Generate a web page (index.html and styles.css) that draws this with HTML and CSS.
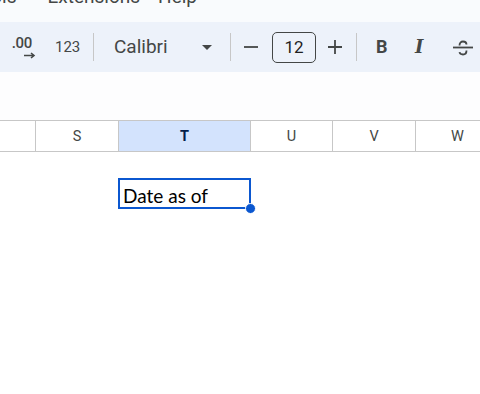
FILE: index.html
```html
<!DOCTYPE html>
<html>
<head>
<meta charset="utf-8">
<link rel="stylesheet" href="styles.css">
</head>
<body>
<div class="menubar">
  <div class="menu-items">
    <span class="menu-item tools">Tools</span>
    <span class="menu-item ext">Extensions</span>
    <span class="menu-item">Help</span>
  </div>
</div>
<div class="toolbar">
  <div class="dec">
    <span class="dec-text">.00</span>
    <svg class="dec-arrow" width="12" height="7" viewBox="0 0 12 7"><path d="M0 3.5h9.5M7 1l3 2.5L7 6" fill="none" stroke="#444746" stroke-width="1.6"/></svg>
  </div>
  <span class="num">123</span>
  <span class="sep sep1"></span>
  <div class="font">
    <span class="font-name">Calibri</span>
    <svg class="tri" width="10" height="5" viewBox="0 0 10 5"><path d="M0 0h10L5 5z" fill="#444746"/></svg>
  </div>
  <span class="sep sep2"></span>
  <svg class="minus" width="14" height="14" viewBox="0 0 14 14"><path d="M0 7h14" stroke="#444746" stroke-width="1.8"/></svg>
  <div class="size">12</div>
  <svg class="plus" width="14" height="14" viewBox="0 0 14 14"><path d="M0 7h14M7 0v14" stroke="#444746" stroke-width="1.8"/></svg>
  <span class="sep sep3"></span>
  <span class="bold">B</span>
  <span class="ital">I</span>
  <svg class="strike" width="20" height="16" viewBox="0 0 20 16"><path d="M0 7.5h20" stroke="#444746" stroke-width="1.8"/><path d="M6.5 5.5C6.5 3 8 1.5 10 1.5s3.5 1.2 3.5 3" fill="none" stroke="#444746" stroke-width="1.8"/><path d="M13.5 10.5c0 2.5-1.5 4-3.5 4s-3.3-1-3.5-2.3" fill="none" stroke="#444746" stroke-width="1.8"/></svg>
</div>
<div class="gap-area"></div>
<div class="sheet">
  <div class="header-row">
    <div class="col c0"></div>
    <div class="col cs">S</div>
    <div class="col ct">T</div>
    <div class="col cu">U</div>
    <div class="col cv">V</div>
    <div class="col cw">W</div>
  </div>
  <div class="row row1"></div>
  <div class="row row2">
    <div class="lead"></div>
    <div class="selected">
      <span class="cell-text">Date as of</span>
      <span class="handle"></span>
    </div>
  </div>
</div>
</body>
</html>
```
FILE: styles.css
```css
* { box-sizing: border-box; }
html, body { margin: 0; padding: 0; }
body {
  width: 480px;
  height: 394px;
  overflow: hidden;
  background: #ffffff;
  font-family: Roboto, "Liberation Sans", sans-serif;
  color: #444746;
}
.menubar {
  height: 22px;
  background: #f9fbfd;
  overflow: hidden;
}
.menu-items {
  display: flex;
  margin-top: -13px;
  font-size: 19px;
  line-height: 20px;
  color: #444746;
  white-space: nowrap;
}
.menu-item.tools { margin-left: -30px; margin-right: 31px; }
.menu-item.ext { margin-right: 18px; }

.toolbar {
  height: 50px;
  background: #edf2fa;
  display: flex;
  align-items: center;
  padding-left: 13px;
  white-space: nowrap;
}
.dec {
  width: 23px;
  margin-right: 19px;
  display: flex;
  flex-direction: column;
  align-items: flex-end;
  margin-top: 1px;
}
.dec-text {
  font-size: 15px;
  line-height: 14px;
  font-weight: 500;
  padding-right: 4px;
  letter-spacing: -0.3px;
}
.dec-arrow { margin-top: 2px; margin-right: 0; }
.num {
  width: 24px;
  margin-right: 14px;
  font-size: 15px;
  line-height: 20px;
}
.sep {
  width: 1px;
  height: 28px;
  background: #c7c7c7;
}
.sep1 { margin-right: 20px; }
.sep2 { margin-right: 13px; }
.sep3 { margin-right: 19px; }
.font {
  width: 116px;
  display: flex;
  align-items: center;
}
.font-name {
  width: 88px;
  font-size: 19px;
  line-height: 22px;
}
.tri { margin-top: 1px; }
.minus { margin-right: 14px; }
.size {
  width: 44px;
  height: 31px;
  border: 1px solid #444746;
  border-radius: 5px;
  margin-right: 12px;
  display: flex;
  align-items: center;
  justify-content: center;
  font-size: 17px;
  color: #1f1f1f;
}
.plus { margin-right: 14px; }
.bold {
  width: 12px;
  margin-right: 27px;
  font-weight: 700;
  font-size: 18px;
  line-height: 20px;
}
.ital {
  width: 14px;
  margin-right: 24px;
  font-family: "DejaVu Serif", serif;
  font-style: italic;
  font-weight: 700;
  font-size: 18px;
  line-height: 20px;
}
.strike { margin-top: 1px; }

.gap-area {
  height: 48px;
  background: #fdfdfe;
}
.sheet { background: #ffffff; }
.header-row {
  display: flex;
  height: 32px;
  border-top: 1px solid #c7c7c7;
  border-bottom: 1px solid #c7c7c7;
  background: #ffffff;
}
.col {
  border-right: 1px solid #c7c7c7;
  display: flex;
  align-items: center;
  justify-content: center;
  font-size: 14.5px;
  color: #444746;
  flex: none;
}
.c0 { width: 36px; }
.cs { width: 83px; }
.ct {
  width: 132px;
  background: #d3e3fd;
  color: #041e49;
  font-weight: 700;
}
.cu { width: 82px; }
.cv { width: 83px; }
.cw { width: 83px; border-right: none; }
.row1 { height: 26px; }
.row2 { display: flex; height: 31px; }
.lead { width: 118px; flex: none; }
.selected {
  position: relative;
  width: 133px;
  height: 31px;
  border: 2px solid #0b57d0;
  padding-left: 3px;
  display: flex;
  align-items: center;
  font-family: Lato, "Open Sans", sans-serif;
  font-size: 19px;
  color: #000000;
}
.cell-text { margin-top: 3px; }
.handle {
  position: absolute;
  right: -7px;
  bottom: -7px;
  width: 11px;
  height: 11px;
  border-radius: 50%;
  background: #0b57d0;
  border: 1px solid #ffffff;
}
```
